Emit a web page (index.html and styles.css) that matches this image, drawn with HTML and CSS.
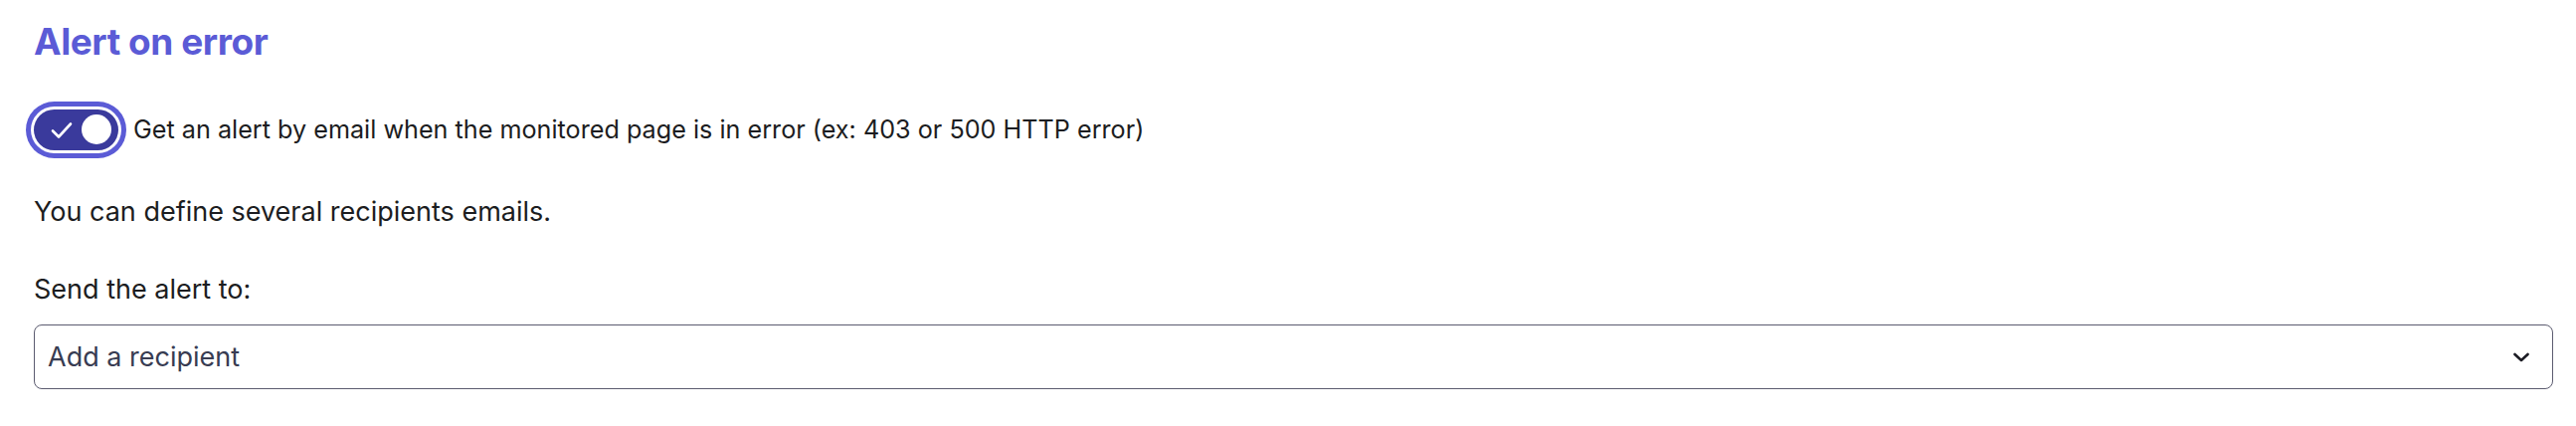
FILE: index.html
```html
<!DOCTYPE html>
<html lang="en">
<head>
  <meta charset="UTF-8">
  <title>Alert on error</title>
  <link rel="stylesheet" href="styles.css">
</head>
<body>
  <section class="alert-settings">
    <h2 class="section-title">Alert on error</h2>

    <label class="toggle-row">
      <span class="toggle is-on">
        <svg class="toggle-check" width="22" height="18" viewBox="0 0 22 18">
          <path d="M2 9.5 L8 15.5 L20 2.5" fill="none" stroke="#fff" stroke-width="2.6" stroke-linecap="round" stroke-linejoin="round"/>
        </svg>
        <span class="toggle-knob"></span>
      </span>
      <span class="toggle-label">Get an alert by email when the monitored page is in error (ex: 403 or 500 HTTP error)</span>
    </label>

    <p class="hint">You can define several recipients emails.</p>

    <p class="field-label">Send the alert to:</p>
    <div class="select">
      <span class="select-placeholder">Add a recipient</span>
      <svg class="select-chevron" width="18" height="12" viewBox="0 0 18 12">
        <path d="M2.5 3 L9 9 L15.5 3" fill="none" stroke="#1c1c24" stroke-width="2.6" stroke-linecap="round" stroke-linejoin="round"/>
      </svg>
    </div>
  </section>
</body>
</html>
```

FILE: styles.css
```css
body {
  margin: 0;
  background: #fff;
  font-family: Inter, "Noto Sans", sans-serif;
  color: #1c1d21;
}

.alert-settings {
  padding: 20px 23px 0 34px;
}

.section-title {
  margin: 0;
  font-size: 37px;
  line-height: 44px;
  font-weight: 700;
  color: #5b5bd6;
  letter-spacing: -0.45px;
}

.toggle-row {
  display: flex;
  align-items: center;
  gap: 15px;
  margin-top: 45px;
}

.toggle {
  position: relative;
  flex: none;
  width: 85px;
  height: 41px;
  border-radius: 21px;
  background: #3a3a9c;
  box-shadow: 0 0 0 3px #fff, 0 0 0 8px #5b5bd6;
}

.toggle-check {
  position: absolute;
  left: 17px;
  top: 12px;
}

.toggle-knob {
  position: absolute;
  right: 7px;
  top: 5.5px;
  width: 30px;
  height: 30px;
  border-radius: 50%;
  background: #fff;
}

.toggle-label {
  font-size: 25.2px;
  line-height: 41px;
  padding-top: 1px;
}

.hint {
  margin: 42px 0 0;
  font-size: 27px;
  line-height: 40px;
}

.field-label {
  margin: 38px 0 0;
  font-size: 27px;
  line-height: 40px;
}

.select {
  display: flex;
  align-items: center;
  justify-content: space-between;
  margin-top: 15px;
  height: 65px;
  box-sizing: border-box;
  padding: 0 22px 0 13px;
  border: 1.5px solid #5c5c70;
  border-radius: 8px;
}

.select-placeholder {
  font-size: 27px;
  color: #383c52;
}
```
